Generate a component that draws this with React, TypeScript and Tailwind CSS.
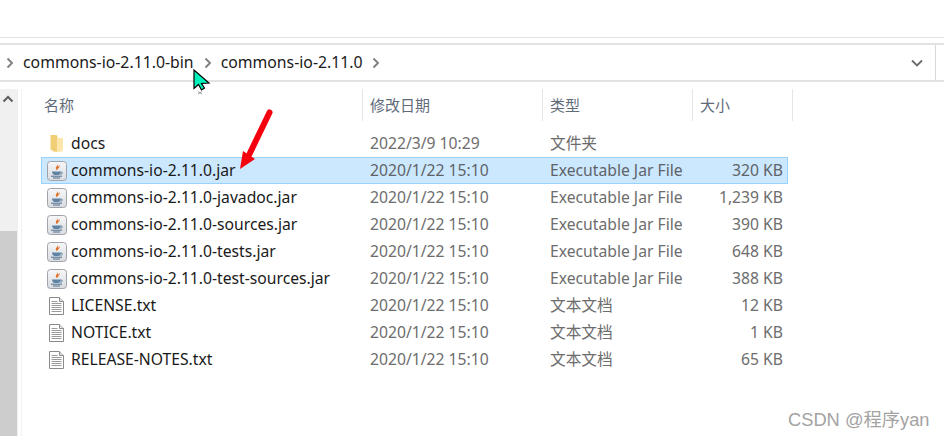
const FONT = "font-['Noto_Sans','Noto_Sans_CJK_SC',sans-serif]";

type FileRow = {
  name: string;
  date: string;
  type: string;
  size?: string;
  icon: "folder" | "jar" | "txt";
  selected?: boolean;
};

const FILES: FileRow[] = [
  { name: "docs", date: "2022/3/9 10:29", type: "文件夹", icon: "folder" },
  { name: "commons-io-2.11.0.jar", date: "2020/1/22 15:10", type: "Executable Jar File", size: "320 KB", icon: "jar", selected: true },
  { name: "commons-io-2.11.0-javadoc.jar", date: "2020/1/22 15:10", type: "Executable Jar File", size: "1,239 KB", icon: "jar" },
  { name: "commons-io-2.11.0-sources.jar", date: "2020/1/22 15:10", type: "Executable Jar File", size: "390 KB", icon: "jar" },
  { name: "commons-io-2.11.0-tests.jar", date: "2020/1/22 15:10", type: "Executable Jar File", size: "648 KB", icon: "jar" },
  { name: "commons-io-2.11.0-test-sources.jar", date: "2020/1/22 15:10", type: "Executable Jar File", size: "388 KB", icon: "jar" },
  { name: "LICENSE.txt", date: "2020/1/22 15:10", type: "文本文档", size: "12 KB", icon: "txt" },
  { name: "NOTICE.txt", date: "2020/1/22 15:10", type: "文本文档", size: "1 KB", icon: "txt" },
  { name: "RELEASE-NOTES.txt", date: "2020/1/22 15:10", type: "文本文档", size: "65 KB", icon: "txt" },
];

function FolderIcon() {
  return (
    <svg width="20" height="20" viewBox="0 0 20 20">
      <path d="M3.500 1h6l1 1v16l-4-.5-3-2z" fill="#f2cf76" />
      <path d="M10.500 4h5.500v11l-1 2.500-4.500.5z" fill="#fce7a8" />
    </svg>
  );
}

function JarIcon() {
  return (
    <svg width="20" height="20" viewBox="0 0 20 20">
      <defs>
        <linearGradient id="jarBg" x1="0" y1="0" x2="0" y2="1">
          <stop offset="0" stopColor="#f7f7f8" />
          <stop offset="1" stopColor="#d9dbe0" />
        </linearGradient>
      </defs>
      <rect x="0.500" y="0.500" width="19" height="19" rx="3" fill="url(#jarBg)" stroke="#9fa3aa" />
      <path d="M10.500 2.500c1.500 2-2.500 3-1.500 5.500.3.700 1 .9 1.500 1-.6-1.500 3-2.500 2-5-.2 1.200-1.300 1.500-1.500 2.200.3-1.300.2-2.700-.5-3.700z" fill="#e0702a" />
      <path d="M5 10.500h9c0 2-1 3-2.500 3.400h-4C6 13.500 5 12.500 5 10.500z" fill="#5f84a3" />
      <path d="M14 11c2 0 2 2-.6 2.400" fill="none" stroke="#5f84a3" />
      <path d="M4 15.200h11M6 17h7" stroke="#4d6f8c" />
    </svg>
  );
}

function TxtIcon() {
  return (
    <svg width="18" height="18" viewBox="0 0 18 18">
      <path d="M1.500 0.500h10l4 4v13h-14z" fill="#fff" stroke="#8a8a8a" />
      <path d="M11.500 0.500v4h4" fill="#e4e4e4" stroke="#8a8a8a" />
      <path d="M3.500 4.500h6M3.500 6.500h10M3.500 8.500h10M3.500 10.500h10M3.500 12.500h10M3.500 14.500h10" stroke="#9a9a9a" />
    </svg>
  );
}

function Chevron({ className }: { className: string }) {
  return (
    <svg width="8" height="12" viewBox="0 0 8 12" className={className}>
      <path d="M1.500 1.500 6 6l-4.500 4.500" fill="none" stroke="#808080" strokeWidth="1.900" />
    </svg>
  );
}

function Row({ file }: { file: FileRow }) {
  const dim = file.selected ? "text-[#5f6368]" : "text-[#6d6d6d]";
  return (
    <div
      className={`flex h-[27px] w-[747px] items-center border text-[15.7px] ${
        file.selected ? "border-[#99d1ff] bg-[#cce8ff]" : "border-transparent"
      }`}
    >
      <div className="flex w-[29px] shrink-0 items-center justify-center">
        {file.icon === "folder" && <FolderIcon />}
        {file.icon === "jar" && <JarIcon />}
        {file.icon === "txt" && <TxtIcon />}
      </div>
      <div className="w-[299px] shrink-0 text-[#1a1a1a]">{file.name}</div>
      <div className={`w-[180px] shrink-0 ${dim}`}>{file.date}</div>
      <div className={`w-[140px] shrink-0 ${dim}`}>{file.type}</div>
      <div className={`w-[93px] shrink-0 text-right ${dim}`}>{file.size}</div>
    </div>
  );
}

export default function App() {
  return (
    <div className={`relative h-[436px] w-[944px] overflow-hidden bg-white ${FONT}`}>
      <div className="h-[38px] border-b border-[#e3e3e3]" />

      <div className="mt-[5px] flex h-[39px] items-center border-y-2 border-[#e2e2e2]">
        <Chevron className="ml-[6px]" />
        <span className="ml-[9px] text-[15.8px] text-[#1a1a1a]">commons-io-2.11.0-bin</span>
        <Chevron className="ml-[10px]" />
        <span className="ml-[9px] text-[15.8px] text-[#1a1a1a]">commons-io-2.11.0</span>
        <Chevron className="ml-[9px]" />
        <svg width="12" height="8" viewBox="0 0 12 8" className="ml-auto mr-[12px]">
          <path d="M1 1.500 6 6.500l5-5" fill="none" stroke="#6d6d6d" strokeWidth="1.900" />
        </svg>
        <div className="mr-[8px] h-full w-px bg-[#d9d9d9]" />
      </div>

      <div className="mt-[7px] flex h-[347px]">
        <div className="flex h-full w-[18px] shrink-0 flex-col bg-[#f0f0f0]">
          <svg width="18" height="18" viewBox="0 0 18 18" className="mt-[1px]">
            <path d="M3.500 11.500 8 7l4.500 4.500" fill="none" stroke="#5f5f5f" strokeWidth="2" />
          </svg>
          <div className="mt-[123px] h-[205px] w-[17px] bg-[#cdcdcd]" />
        </div>
        <div className="ml-[3px] h-full w-px bg-[#f2f2f2]" />

        <div className="ml-[19px] flex flex-col">
          <div className="flex h-[32px] text-[15px] text-[#5f6b7a]">
            <div className="flex w-[322px] items-center border-r border-[#e5e5e5] pl-[3px]">名称</div>
            <div className="flex w-[180px] items-center border-r border-[#e5e5e5] pl-[7px]">修改日期</div>
            <div className="flex w-[150px] items-center border-r border-[#e5e5e5] pl-[7px]">类型</div>
            <div className="flex w-[100px] items-center border-r border-[#e5e5e5] pl-[7px]">大小</div>
          </div>
          <div className="mt-[9px] flex flex-col">
            {FILES.map((file) => (
              <Row key={file.name} file={file} />
            ))}
          </div>
        </div>
      </div>

      {/* mouse cursor left on the screenshot */}
      <svg width="20" height="28" viewBox="0 0 20 28" className="absolute left-[193px] top-[69px]">
        <path d="M1 1v18.500l4.500-4 3 5.500 3-2-3-4.500 7.500-.5z" fill="#00f2bc" stroke="#000" strokeWidth="1.200" />
        <path d="M5 22.500l4 2.500M9 22.500l-4 2.500" stroke="#8a8a8a" strokeWidth="0.800" />
      </svg>

      {/* red annotation arrow */}
      <svg width="40" height="66" viewBox="0 0 40 66" className="absolute left-[236px] top-[106px]">
        <path d="M33.500 6.500 13 49" stroke="#f5000f" strokeWidth="6" strokeLinecap="round" />
        <path d="M4 63 7 45 19 53z" fill="#f5000f" />
      </svg>

      <div className="absolute left-[788px] top-[406px] font-['Liberation_Sans','Noto_Sans_CJK_SC',sans-serif] text-[18.300px] text-[#a3a3a3]">
        CSDN @程序yan
      </div>
    </div>
  );
}
